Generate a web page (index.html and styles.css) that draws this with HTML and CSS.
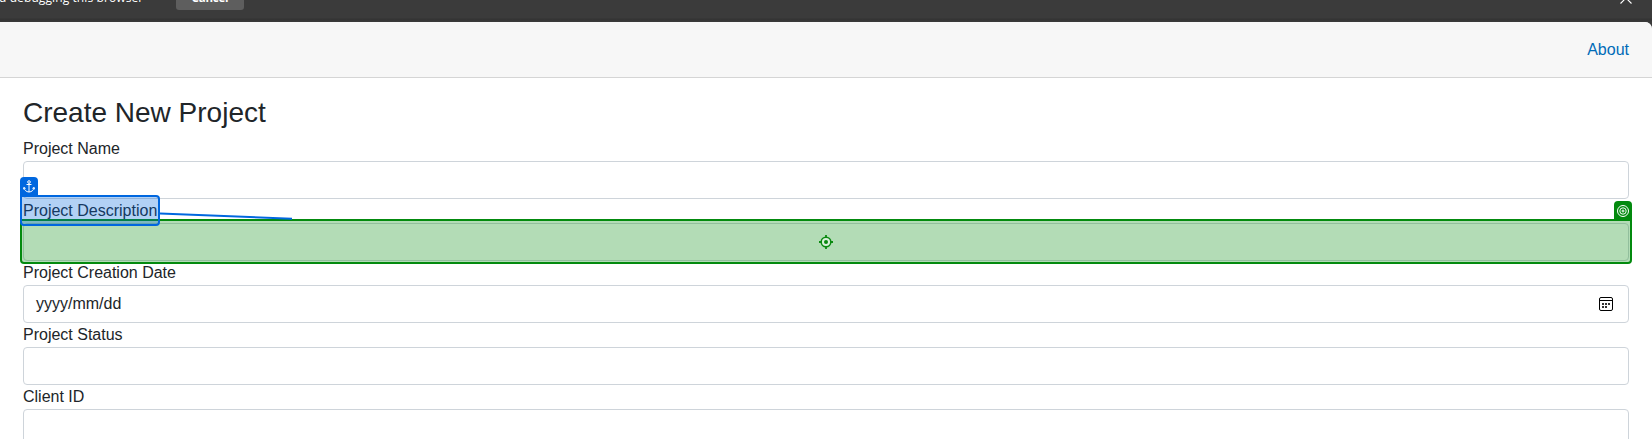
FILE: index.html
```
<!DOCTYPE html>
<html lang="en">
<head>
<meta charset="utf-8">
<title>Create New Project</title>
<link rel="stylesheet" href="styles.css">
</head>
<body>
<div class="infobar">
  <span class="infobar-text">d debugging this browser</span>
  <span class="infobar-button">Cancel</span>
  <svg class="infobar-close" width="12" height="12" viewBox="0 0 12 12"><path d="M.5.5l11 11M11.5.5l-11 11" fill="none" stroke="#fff" stroke-width="1.1"/></svg>
</div>
<div class="page">
  <nav class="topnav"><a class="about">About</a></nav>
  <main class="content">
    <h1 class="title">Create New Project</h1>
    <div class="field"><label class="label">Project Name</label><div class="input"></div></div>
    <div class="field"><label class="label">Project Description</label><div class="input"></div></div>
    <div class="field"><label class="label">Project Creation Date</label>
      <div class="input"><span class="placeholder">yyyy/mm/dd</span>
        <svg class="calendar" width="14" height="14" viewBox="0 0 14 14"><rect x=".5" y=".5" width="13" height="13" rx="1.5" fill="none" stroke="#000"/><path d="M1 3.5h12" stroke="#000"/><path d="M3 6h2v2H3zM6 6h2v2H6zM9 6h2v2H9zM3 9h2v2H3zM6 9h2v2H6z" fill="#333"/></svg>
      </div></div>
    <div class="field"><label class="label">Project Status</label><div class="input"></div></div>
    <div class="field"><label class="label">Client ID</label><div class="input"></div></div>
  </main>
</div>
<div class="target-box">
  <svg width="14" height="14" viewBox="0 0 14 14"><circle cx="7" cy="7" r="4.8" fill="#d9efda" stroke="#0a8a10" stroke-width="1.5"/><circle cx="7" cy="7" r="2" fill="#0a8a10"/><path d="M7 0v3M7 11v3M0 7h3M11 7h3" stroke="#0a8a10" stroke-width="1.8"/></svg>
</div>
<div class="target-tag">
  <svg width="12" height="12" viewBox="0 0 12 12" fill="none" stroke="#fff"><circle cx="6" cy="6" r="5.5"/><circle cx="6" cy="6" r="3.2"/><circle cx="6" cy="6" r="1" /></svg>
</div>
<svg class="connector" width="134" height="10" viewBox="0 0 134 10"><path d="M0 3.500L132 8.700" stroke="#0067df" stroke-width="2"/></svg>
<div class="anchor-box"></div>
<div class="anchor-tag">
  <svg width="12" height="13" viewBox="0 0 12 13" fill="none" stroke="#fff" stroke-width="1"><circle cx="6" cy="2" r="1.300"/><path d="M6 3.300v8.800M3.500 4.500h5M.9 7.500c.6 2.900 2.300 4.300 5.100 4.500 2.800-.2 4.500-1.600 5.100-4.500M.5 9.300L.9 7.500l1.700.9M11.500 9.300l-.4-1.800-1.700.9"/></svg>
</div>
</body>
</html>
```
FILE: styles.css
```
* { box-sizing: border-box; }
body {
  margin: 0;
  height: 439px;
  overflow: hidden;
  position: relative;
  background: #3b3b3b;
  color: #212529;
  font: 16px/24px "Liberation Sans", Arial, sans-serif;
}
.infobar {
  height: 22px;
  display: flex;
  align-items: flex-start;
  background: linear-gradient(#3b3b3b 18px, #333 19px, #3b3b3b 22px);
  color: #fff;
  font: 12px/16px "Open Sans", "Noto Sans", sans-serif;
}
.infobar-text {
  width: 176px;
  margin-top: -10px;
  margin-left: -1px;
  font-weight: 500;
  letter-spacing: .1px;
  white-space: nowrap;
}
.infobar-button {
  width: 68px;
  height: 24px;
  margin-top: -14px;
  margin-left: 1px;
  padding-top: 4px;
  border-radius: 3px;
  background: #5e5e5e;
  font-size: 11.5px;
  font-weight: 700;
  letter-spacing: -.2px;
  text-align: center;
}
.infobar-close { margin: -8px 20px 0 auto; }
.page {
  height: 417px;
  overflow: hidden;
  border-top-right-radius: 7px;
  background: #fff;
}
.topnav {
  height: 56px;
  padding: 16px 23px 0 0;
  border-bottom: 1px solid #d5d5d5;
  background: #f7f7f7;
  text-align: right;
}
.about { color: #006bb7; }
.content { padding: 18px 23px 0; }
.title {
  height: 41px;
  margin: 0;
  font-size: 28px;
  font-weight: 400;
  line-height: 34px;
}
.label { display: block; height: 24px; }
.input {
  height: 38px;
  display: flex;
  align-items: center;
  justify-content: space-between;
  padding: 0 15px 0 12px;
  border: 1px solid #ced4da;
  border-radius: 4px;
}
.placeholder { padding-bottom: 1px; }
.target-box {
  position: absolute;
  left: 20px;
  top: 219px;
  width: 1612px;
  height: 45px;
  display: flex;
  align-items: center;
  justify-content: center;
  border: 2px solid #038a0e;
  border-radius: 0 0 4px 4px;
  background: rgba(3, 138, 14, .3);
}
.target-tag, .anchor-tag {
  position: absolute;
  width: 18px;
  height: 19px;
  display: flex;
  align-items: center;
  justify-content: center;
  border-radius: 4px 4px 0 0;
}
.target-tag { left: 1614px; top: 201px; background: #038a0e; }
.anchor-tag { left: 20px; top: 177px; background: #0067df; }
.connector { position: absolute; left: 160px; top: 210px; }
.anchor-box {
  position: absolute;
  left: 20px;
  top: 195px;
  width: 140px;
  height: 31px;
  border: 2px solid #0067df;
  border-radius: 0 4px 4px 4px;
  background: rgba(0, 103, 223, .3);
}
```
